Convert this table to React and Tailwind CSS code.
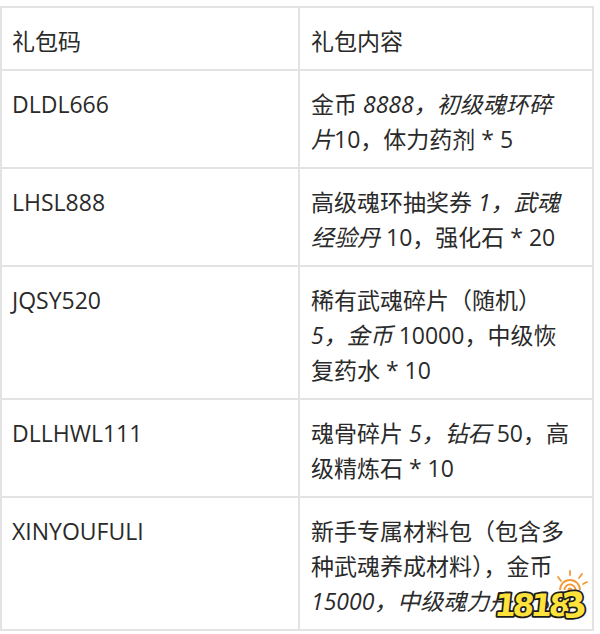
import React from "react";

const rows = [
  {
    code: "DLDL666",
    content: (
      <>
        金币 <em>8888，初级魂环碎片</em>10，体力药剂 * 5
      </>
    ),
  },
  {
    code: "LHSL888",
    content: (
      <>
        高级魂环抽奖券 <em>1，武魂经验丹</em> 10，强化石 * 20
      </>
    ),
  },
  {
    code: "JQSY520",
    content: (
      <>
        稀有武魂碎片（随机） <em>5，金币</em> 10000，中级恢复药水 * 10
      </>
    ),
  },
  {
    code: "DLLHWL111",
    content: (
      <>
        魂骨碎片 <em>5，钻石</em> 50，高级精炼石 * 10
      </>
    ),
  },
  {
    code: "XINYOUFULI",
    content: (
      <>
        新手专属材料包（包含多种武魂养成材料），金币 <em>15000，中级魂力丹</em> * 5
      </>
    ),
  },
];

// 18183 watermark in the bottom-right corner
const Watermark = () => (
  <svg
    className="absolute left-[490px] top-[566px]"
    width="104"
    height="56"
    viewBox="0 0 104 56"
  >
    <g fill="none" stroke="#f29a38" strokeWidth="1.8">
      <path d="M70 24a10 10 0 0 1 20 0" />
      <path d="M74.5 24a5.5 5.5 0 0 1 11 0" />
      <path d="M78.5 24a1.5 1.5 0 0 1 3 0" />
      <path d="M68 11l3 4M80 5v4M92 8l-3 4M97 16l-4 2" strokeLinecap="round" />
    </g>
    <g transform="skewX(-6)">
      <text
        x="9"
        y="50"
        fontFamily="DejaVu Sans, sans-serif"
        fontWeight="bold"
        fontSize="31"
        letterSpacing="-3.5"
        fill="#ffe23a"
        stroke="#1c1c1c"
        strokeWidth="3.6"
        paintOrder="stroke"
        strokeLinejoin="round"
      >
        1818
      </text>
    </g>
    <text
      x="72"
      y="51"
      fontFamily="DejaVu Sans, sans-serif"
      fontWeight="bold"
      fontSize="35"
      fill="#ffe23a"
      stroke="#1c1c1c"
      strokeWidth="3.6"
      paintOrder="stroke"
      strokeLinejoin="round"
      transform="rotate(-8 86 38)"
    >
      3
    </text>
  </svg>
);

export default function App() {
  return (
    <div
      className="relative w-[600px] h-[634px] overflow-hidden bg-white pt-[6px] text-[23px] leading-[35px] text-[#2a2a2a]"
      style={{ fontFamily: '"Open Sans", "Noto Sans CJK SC", sans-serif' }}
    >
      <table className="w-[594px] table-fixed border-collapse">
        <colgroup>
          <col className="w-[298px]" />
          <col />
        </colgroup>
        <thead>
          <tr>
            <th className="border-2 border-[#e3e3e3] pl-[10px] pr-[11px] pt-[16px] pb-[10px] text-left font-normal">
              礼包码
            </th>
            <th className="border-2 border-[#e3e3e3] pl-[11px] pr-[20px] pt-[16px] pb-[10px] text-left font-normal">
              礼包内容
            </th>
          </tr>
        </thead>
        <tbody>
          {rows.map((r) => (
            <tr key={r.code}>
              <td className="border-2 border-[#e3e3e3] pl-[10px] pr-[11px] pt-[16px] pb-[10px] align-top">
                {r.code}
              </td>
              <td className="border-2 border-[#e3e3e3] pl-[11px] pr-[20px] pt-[16px] pb-[10px] align-top">
                {r.content}
              </td>
            </tr>
          ))}
        </tbody>
      </table>
      <Watermark />
    </div>
  );
}
